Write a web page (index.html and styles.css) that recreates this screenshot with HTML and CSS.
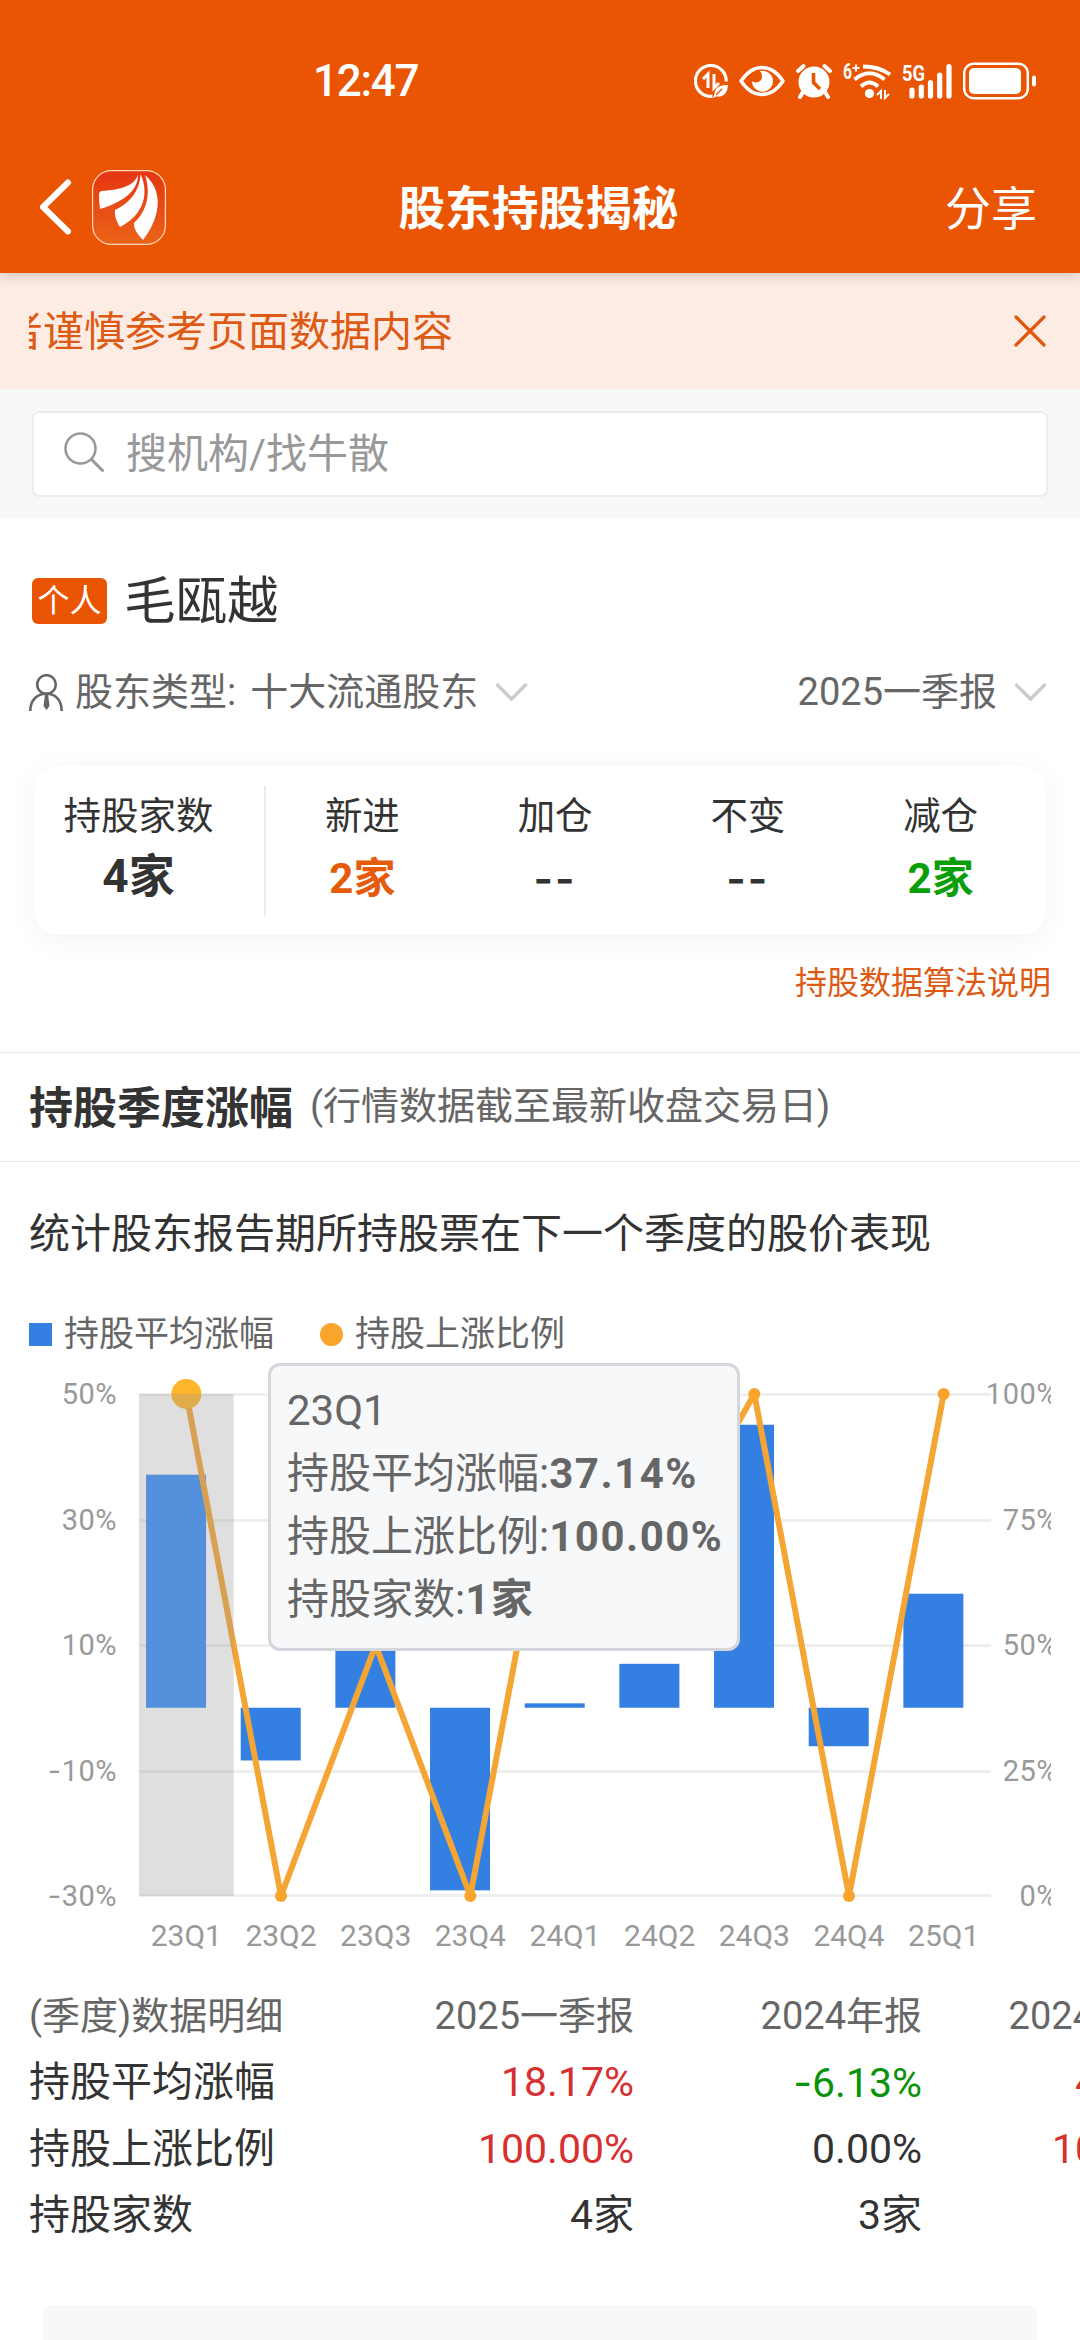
FILE: index.html
```
<!DOCTYPE html>
<html lang="zh-CN">
<head>
	<meta charset="UTF-8">
	<title>股东持股揭秘</title>
	<link rel="stylesheet" href="styles.css">
</head>
<body>
<header class="header">
	<div class="status">
		<span class="clock">12:47</span>
		<div class="status-icons">
			<svg width="34" height="36" viewBox="0 0 34 36">
				<path d="M18.5 33.2A15.4 15.4 0 1 1 32.2 18.5" fill="none" stroke="#fff" stroke-width="3.2"/>
				<path d="M9 16l5-5v14M25 20l-5 5V11" fill="none" stroke="#fff" stroke-width="3"/>
				<path d="M34 22c-8 0-13 2-13.500 9l-1.500 4 3-1.500c8 1 11.500-3.500 12-11.500z" fill="#fff"/>
				<path d="M22 32l6-6" stroke="#ea5504" stroke-width="1.500"/>
			</svg>
			<svg width="46" height="36" viewBox="0 0 46 36">
				<path d="M2 18Q11 4.500 23 4.500T44 18Q35 31.500 23 31.500T2 18z" fill="none" stroke="#fff" stroke-width="3.4" stroke-linejoin="round"/>
				<path d="M21 8a10.500 10.500 0 1 1-8 10c3 3 10 1 10-4 0-3-1-5-2-6z" fill="#fff"/>
			</svg>
			<svg width="36" height="36" viewBox="0 0 36 36">
				<circle cx="18" cy="19" r="15.500" fill="#fff"/>
				<path d="M2 8l5.500-5M34 8l-5.500-5M7 29l-3 5M29 29l3 5" stroke="#fff" stroke-width="4" stroke-linecap="round"/>
				<path d="M17.500 10v9.500l6.500 6.500" fill="none" stroke="#ea5504" stroke-width="3.600"/>
			</svg>
			<svg width="48" height="38" viewBox="0 0 48 38">
				<text x="0" y="17" class="net" textLength="9" lengthAdjust="spacingAndGlyphs">6</text>
				<path d="M13 2.500v7M9.500 6h7" stroke="#fff" stroke-width="2"/>
				<path d="M20 4.500q16 0 27 8M11.500 17.500q15-12.500 30 0M18 24.500q8.500-8 17 0" fill="none" stroke="#fff" stroke-width="3.800"/>
				<circle cx="26.500" cy="31.500" r="4.600" fill="#fff"/>
				<path d="M34 33l4-4v8M46 32l-4 4v-8" fill="none" stroke="#fff" stroke-width="2"/>
			</svg>
			<svg width="50" height="36" viewBox="0 0 50 36">
				<text x="0" y="18" class="net" textLength="23" lengthAdjust="spacingAndGlyphs">5G</text>
				<path d="M10 27v6M19.300 24v9M28.500 19.500v13.500M37.700 12v21M47 3.500v29.500" stroke="#fff" stroke-width="5.200" stroke-linecap="round"/>
			</svg>
			<svg width="73" height="38" viewBox="0 0 73 38">
				<rect x="1.200" y="1.700" width="63.600" height="34.600" rx="9.500" fill="none" stroke="#fff" stroke-width="2.400"/>
				<rect x="6" y="6" width="52" height="26" rx="5" fill="#fff"/>
				<rect x="69" y="13.500" width="4" height="11" rx="2" fill="#fff"/>
			</svg>
		</div>
	</div>
	<div class="nav">
		<div class="nav-left">
			<svg class="back" width="32" height="56" viewBox="0 0 32 56">
				<path d="M28 3.500L3 28l25 24.500" fill="none" stroke="#fff" stroke-width="6" stroke-linecap="round"/>
			</svg>
			<svg width="74" height="75" viewBox="0 0 74 75">
				<defs>
					<linearGradient id="logo" x1="0" y1="0" x2="0" y2="1">
						<stop offset="0" stop-color="#e63512"/>
						<stop offset="1" stop-color="#ea6418"/>
					</linearGradient>
				</defs>
				<rect x=".6" y=".6" width="72.800" height="73.800" rx="19" fill="url(#logo)" stroke="#ffd9c2" stroke-width="1.200"/>
				<g fill="#fff">
					<path d="M46 5C42 16 28 20 9 21q-2 1-2 4 0 7 1 14C31 32 46 21 46 5z"/>
					<path d="M48.500 4C48 22 36 34 23 40q-1 8 5 17C48 47 59 27 48.500 4z"/>
					<path d="M53 5c7 21 0 38-11 48q-1 7 9 17C66 51 74 23 53 5z"/>
				</g>
			</svg>
		</div>
		<h1>股东持股揭秘</h1>
		<span class="share">分享</span>
	</div>
</header>

<div class="notice">
	<div class="marquee"><span>者谨慎参考页面数据内容</span></div>
	<svg width="34" height="34" viewBox="0 0 34 34">
		<path d="M3 3l28 28M31 3L3 31" stroke="#e2560e" stroke-width="3.200" stroke-linecap="round"/>
	</svg>
</div>

<div class="search">
	<div class="search-box">
		<svg width="41" height="41" viewBox="0 0 41 41">
			<circle cx="16.500" cy="16.500" r="15" fill="none" stroke="#999" stroke-width="2.600"/>
			<path d="M27 27l12.500 12.500" stroke="#999" stroke-width="3"/>
		</svg>
		<span>搜机构/找牛散</span>
	</div>
</div>

<section class="holder">
	<div class="name-row">
		<span class="tag">个人</span>
		<span class="name">毛瓯越</span>
	</div>
	<div class="filter-row">
		<svg width="34" height="37" viewBox="0 0 34 37">
			<circle cx="17.500" cy="10.500" r="9.300" fill="none" stroke="#666" stroke-width="2.600"/>
			<path d="M1.300 37C1.300 26 8 19.800 17.300 19.800S32.700 26 32.700 37" fill="none" stroke="#666" stroke-width="2.600"/>
			<path d="M16 20h3l1.500 12-3 4-3-4z" fill="#666"/>
		</svg>
		<span class="label">股东类型:</span>
		<span>十大流通股东</span>
		<svg class="chev" width="33" height="20" viewBox="0 0 33 20">
			<path d="M1.500 2l15 15 15-15" fill="none" stroke="#ccc" stroke-width="3.400"/>
		</svg>
		<span class="period">2025一季报</span>
		<svg class="chev" width="33" height="20" viewBox="0 0 33 20">
			<path d="M1.500 2l15 15 15-15" fill="none" stroke="#ccc" stroke-width="3.400"/>
		</svg>
	</div>
	<div class="card">
		<div class="cell total"><span>持股家数</span><b>4家</b></div>
		<div class="cell"><span>新进</span><b class="orange">2家</b></div>
		<div class="cell"><span>加仓</span><b class="dash">--</b></div>
		<div class="cell"><span>不变</span><b class="dash">--</b></div>
		<div class="cell"><span>减仓</span><b class="green">2家</b></div>
	</div>
	<div class="explain">持股数据算法说明</div>
</section>

<div class="section-title">
	<h2>持股季度涨幅</h2>
	<span>(行情数据截至最新收盘交易日)</span>
</div>
<p class="desc">统计股东报告期所持股票在下一个季度的股价表现</p>

<div class="legend">
	<i class="square"></i><span>持股平均涨幅</span>
	<i class="dot"></i><span>持股上涨比例</span>
</div>
<div class="chart">
	<svg id="chart" width="1051" height="606" viewBox="0 0 1051 606"></svg>
	<div class="tooltip">
		<div>23Q1</div>
		<div>持股平均涨幅:<b>37.14%</b></div>
		<div>持股上涨比例:<b>100.00%</b></div>
		<div>持股家数:<b>1家</b></div>
	</div>
</div>

<div class="detail">
	<div class="row head"><span>(季度)数据明细</span><span>2025一季报</span><span>2024年报</span><span>2024三季报</span></div>
	<div class="row"><span>持股平均涨幅</span><span class="up">18.17%</span><span class="down"><i class="minus">-</i>6.13%</span><span class="up">45.10%</span></div>
	<div class="row"><span>持股上涨比例</span><span class="up">100.00%</span><span>0.00%</span><span class="up">100.00%</span></div>
	<div class="row"><span>持股家数</span><span>4家</span><span>3家</span><span>3家</span></div>
</div>
<div class="bottom-box"></div>

<script>
	const quarters = ["23Q1","23Q2","23Q3","23Q4","24Q1","24Q2","24Q3","24Q4","25Q1"];
	const gain = [37.14, -8.4, 18, -29.1, 0.7, 7, 45.1, -6.13, 18.17];
	const ratio = [100, 0, 50, 0, 100, 66.67, 100, 0, 100];
	// 绘图区
	const left = 139, right = 991, top0 = 31, height = 502;
	const step = (right - left) / quarters.length;
	const gainY = v => top0 + (50 - v) / 80 * height;
	const ratioY = v => top0 + (100 - v) / 100 * height;
	const cx = i => left + step * (i + 0.5);

	let html = "";
	// 网格线和坐标轴文字
	for(let i=0; i<5; i++){
		const y = top0 + height / 4 * i;
		const lineY = Math.round(y) + (i == 4 ? -0.5 : 0.5);
		const v = 50 - 20 * i;
		const sign = v < 0 ? `<tspan class="minus">-</tspan>` : "";
		html += `<line class="grid" x1="${left}" y1="${lineY}" x2="${right}" y2="${lineY}"/>`;
		html += `<text class="axis" x="117" y="${y + 10}" text-anchor="end">${sign}${Math.abs(v)}%</text>`;
		html += `<text class="axis" x="1058" y="${y + 10}" text-anchor="end">${100 - 25 * i}%</text>`;
	}
	// 柱子
	gain.forEach((v, i) => {
		const y = Math.min(gainY(v), gainY(0));
		html += `<rect class="bar ${i == 0 ? "current" : ""}" x="${cx(i) - 40.3}" y="${y}" width="60" height="${Math.abs(gainY(v) - gainY(0))}"/>`;
		html += `<text class="quarter" x="${cx(i)}" y="583" text-anchor="middle">${quarters[i]}</text>`;
	});
	// 折线
	html += `<polyline class="line" points="${ratio.map((v, i) => cx(i) + "," + ratioY(v)).join(" ")}"/>`;
	ratio.forEach((v, i) => {
		html += `<circle class="${i == 0 ? "active" : "point"}" cx="${cx(i)}" cy="${ratioY(v)}" r="${i == 0 ? 15 : 6}"/>`;
	});
	// 选中季度的阴影
	html += `<rect class="shadow" x="${left}" y="${top0}" width="${step}" height="${height}"/>`;
	document.querySelector("#chart").innerHTML = html;
</script>
</body>
</html>
```
FILE: styles.css
```
*{
	box-sizing: border-box;
}
body{
	margin: 0;
	width: 1080px;
	height: 2340px;
	overflow: hidden;
	background-color: #fff;
	color: #333;
	font-family: Roboto, "Noto Sans CJK SC", sans-serif;
}
svg{
	display: block;
	flex: none;
}
h1, h2, p{
	margin: 0;
}
i{
	font-style: normal;
}

/* 顶部 */
.header{
	position: relative;
	height: 273px;
	background-color: #ea5504;
	color: #fff;
	box-shadow: 0 2px 12px rgba(0,0,0,0.2);
}
.status{
	display: flex;
	justify-content: space-between;
	align-items: center;
	height: 162px;
	padding: 0 44px 0 313px;
}
.clock{
	font-size: 44px;
	font-weight: 500;
	letter-spacing: -1.3px;
}
.status-icons{
	display: flex;
	align-items: center;
	gap: 11px;
}
.net{
	font-size: 22px;
	font-weight: 700;
	fill: #fff;
}
.nav{
	display: grid;
	grid-template-columns: 1fr auto 1fr;
	align-items: center;
	height: 92px;
	padding: 0 43px 0 40px;
}
.nav-left{
	display: flex;
	align-items: center;
	gap: 20px;
	margin-top: -2px;
}
.nav h1{
	padding-top: 2px;
	font-size: 46.700px;
	line-height: 60px;
}
.share{
	padding-top: 1px;
	font-size: 46px;
	line-height: 60px;
	text-align: right;
}

/* 公告 */
.notice{
	display: flex;
	justify-content: space-between;
	align-items: center;
	height: 116px;
	padding: 0 33px 0 29px;
	background-color: #fdece3;
}
.marquee{
	overflow: hidden;
}
.marquee span{
	display: block;
	margin-left: -27px;
	padding-top: 2px;
	font-size: 41px;
	line-height: 60px;
	color: #dd5a14;
}

/* 搜索 */
.search{
	height: 129px;
	padding: 22px 32px;
	background-color: #f7f8fa;
}
.search-box{
	display: flex;
	align-items: center;
	gap: 21px;
	height: 86px;
	padding: 0 0 3px 30px;
	border: 2px solid #ececee;
	border-radius: 7px;
	background-color: #fff;
	font-size: 41px;
	line-height: 60px;
	color: #999;
}
.search-box span{
	padding-top: 2px;
}

.holder{
	height: 534px;
	padding: 50px 32px 0;
}
.name-row{
	display: flex;
	align-items: center;
	gap: 17px;
	height: 66px;
}
.tag{
	width: 75px;
	height: 46px;
	border-radius: 6px;
	background-color: #ea5504;
	color: #fff;
	font-size: 32px;
	line-height: 47px;
	text-align: center;
}
.name{
	padding-top: 2px;
	font-size: 51.500px;
	line-height: 66px;
}
.filter-row{
	display: flex;
	align-items: center;
	height: 60px;
	margin: 28px 1px 0 -3px;
	font-size: 38px;
	line-height: 60px;
	color: #666;
}
.label{
	margin: 0 14px 0 12px;
}
.chev{
	margin-left: 17px;
}
.period{
	margin-left: auto;
}
.card{
	display: flex;
	align-items: center;
	height: 169px;
	margin: 44px 3px 0;
	padding-right: 8px;
	border-radius: 22px;
	background-color: #fff;
	box-shadow: 0 4px 30px rgba(0,0,0,0.05);
}
.cell{
	flex: 1;
	display: flex;
	flex-direction: column;
	align-items: center;
	height: 130px;
	font-size: 37.500px;
	line-height: 60px;
}
.cell b{
	margin-top: 3px;
	font-size: 42px;
}
.cell.total{
	flex: none;
	width: 231px;
	padding-right: 22px;
	border-right: 2px solid #ebebeb;
}
.cell.total b{
	margin-top: 0;
	font-size: 46px;
}
.cell .dash{
	font-family: Inter, sans-serif;
	font-weight: 600;
	letter-spacing: 2px;
}
.orange{
	color: #e65a0c;
}
.green{
	color: #0a9f0a;
}
.explain{
	margin: 24px -3px 0 0;
	font-size: 32px;
	line-height: 48px;
	text-align: right;
	color: #dd5a14;
}

/* 标题 */
.section-title{
	display: flex;
	align-items: center;
	gap: 17px;
	height: 110px;
	padding-left: 29px;
	border-top: 1px solid #e8e8e8;
	border-bottom: 1px solid #e8e8e8;
}
.section-title h2{
	padding-top: 4px;
	font-size: 44px;
	line-height: 60px;
}
.section-title span{
	font-size: 38px;
	line-height: 60px;
	margin-top: -3px;
	color: #666;
}
.desc{
	padding: 42px 0 0 29px;
	font-size: 41px;
	line-height: 60px;
}
.legend{
	display: flex;
	align-items: center;
	height: 50px;
	margin-top: 45px;
	padding-left: 29px;
	font-size: 35px;
	line-height: 50px;
	color: #666;
}
.legend span{
	padding-top: 1px;
}
.legend i{
	width: 23px;
	height: 23px;
	margin: 0 12px 0 0;
}
.square{
	background-color: #3380e2;
}
.legend .dot{
	margin-left: 46px;
	border-radius: 50%;
	background-color: #f9a42b;
}

/* 图表 */
.chart{
	position: relative;
	margin-top: 4px;
}
.grid{
	stroke: #eee;
	stroke-width: 3;
}
.axis{
	font-size: 29px;
	letter-spacing: 0.5px;
	fill: #999;
}
.quarter{
	font-size: 30px;
	fill: #999;
}
.bar{
	fill: #3380e2;
}
.bar.current{
	fill: #398ff9;
}
.line{
	fill: none;
	stroke: #f5a534;
	stroke-width: 6;
	stroke-linejoin: bevel;
}
.point{
	fill: #f9a42b;
}
.active{
	fill: #ffb52b;
}
.shadow{
	fill: rgba(150,150,150,0.3);
}
.minus{
	font-family: Inter, sans-serif;
}
.tooltip{
	position: absolute;
	left: 268px;
	top: 0;
	width: 472px;
	height: 288px;
	padding: 13px 16px;
	border: 3px solid #d3d6dc;
	border-radius: 12px;
	background-color: #f7f8fa;
	font-size: 42px;
	line-height: 63px;
	white-space: nowrap;
	color: #666;
}
.tooltip b{
	letter-spacing: 1.5px;
}

/* 明细 */
.detail{
	margin-top: 14px;
	padding-left: 29px;
	overflow: hidden;
}
.row{
	display: grid;
	grid-template-columns: 303px 302px 288px 286px;
	height: 66.300px;
	font-size: 41px;
	line-height: 66px;
	white-space: nowrap;
}
.row span + span{
	text-align: right;
}
.head{
	font-size: 38px;
	color: #666;
}
.up{
	color: #d63030;
}
.down{
	color: #0a930a;
}
.bottom-box{
	height: 60px;
	margin: 57px 43px 0;
	border-radius: 10px;
	background-color: #f7f8fa;
}
```
